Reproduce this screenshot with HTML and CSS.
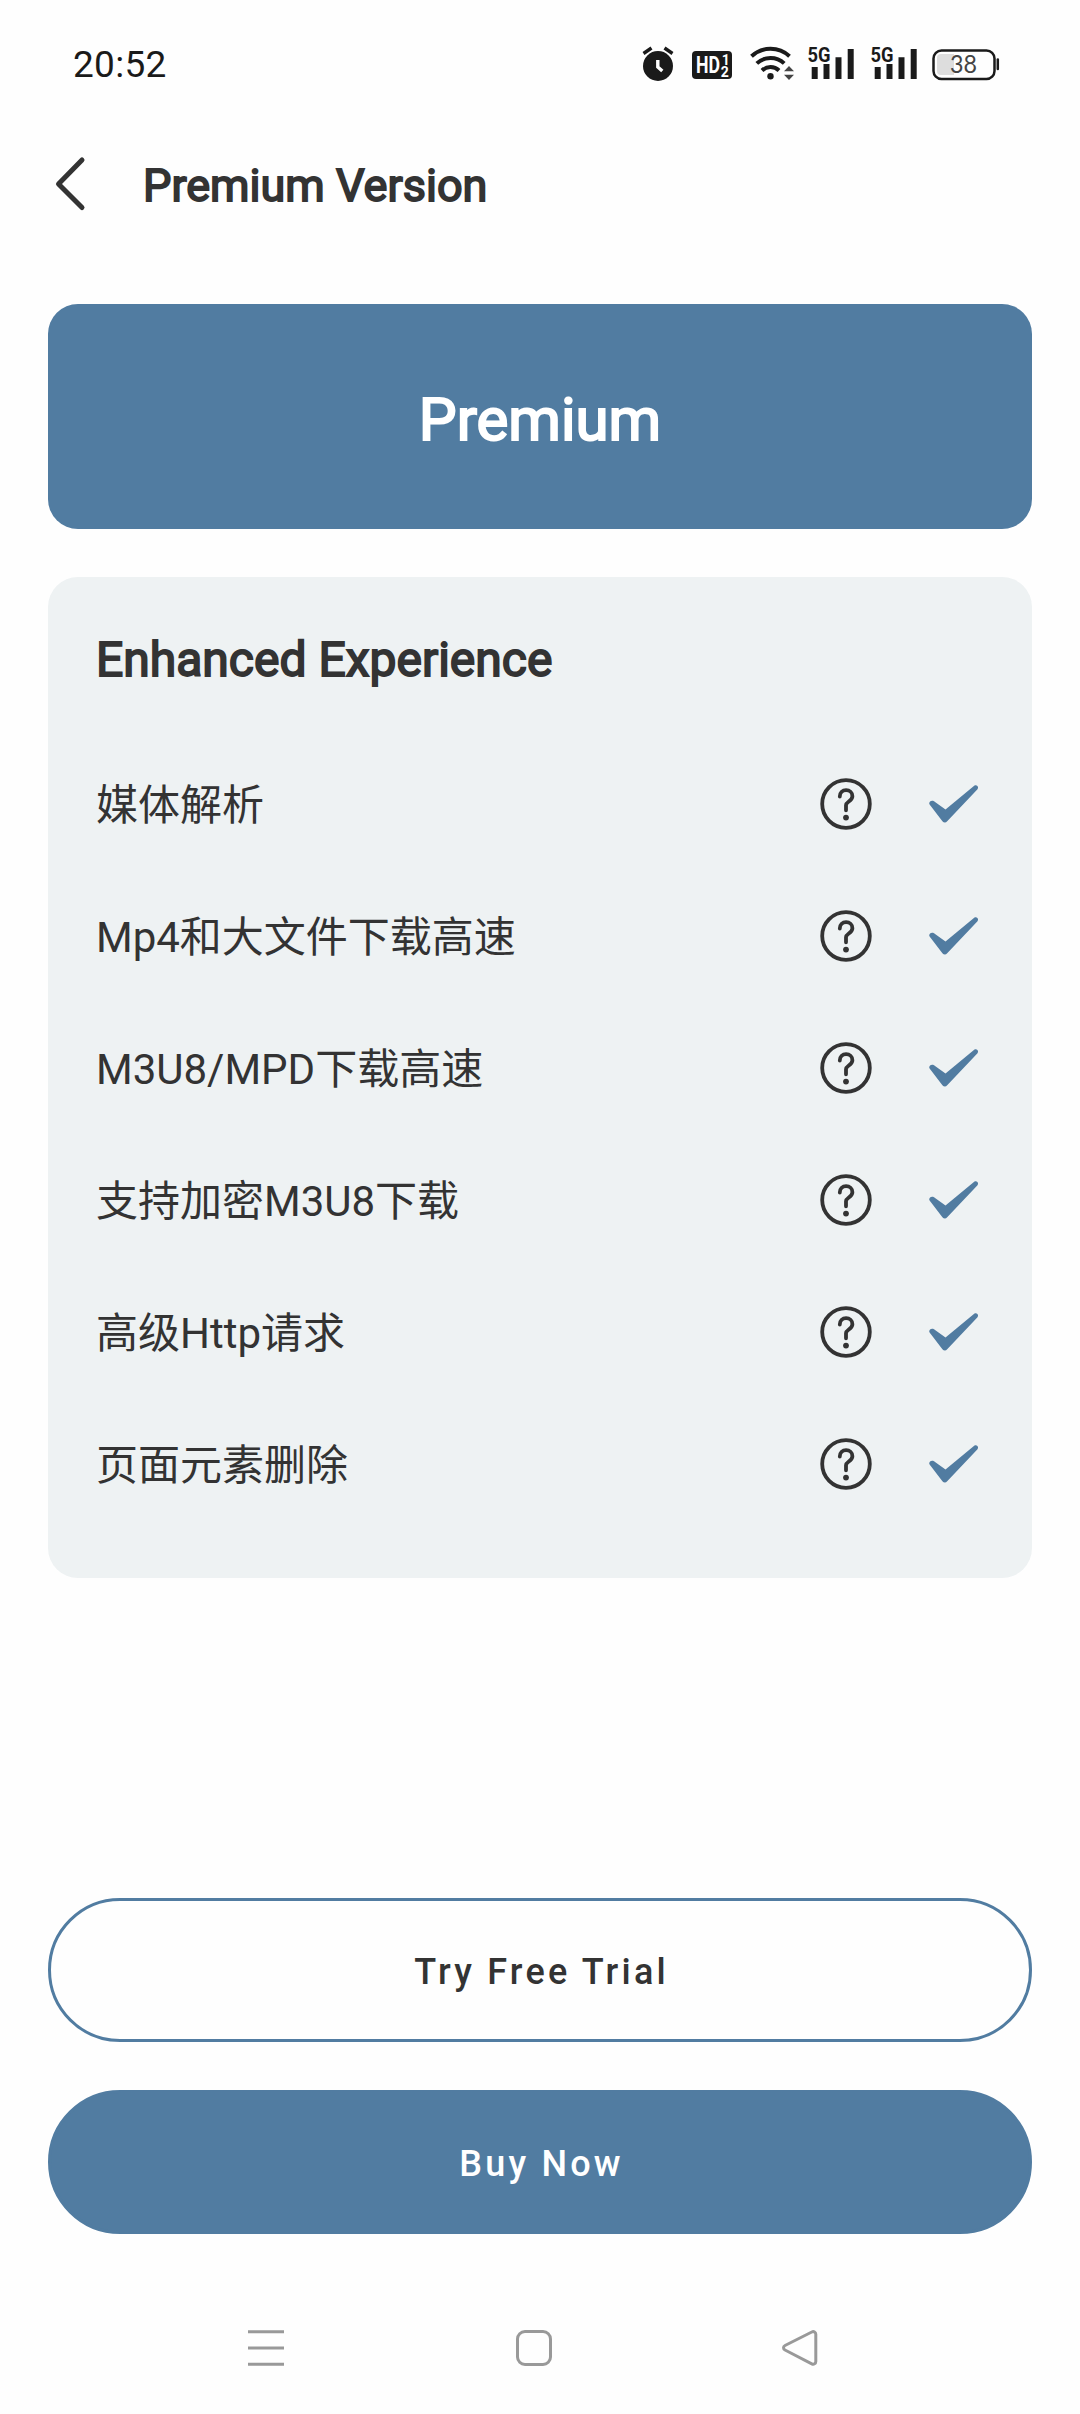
FILE: index.html
```html
<!DOCTYPE html>
<html lang="zh-CN">

<head>
    <meta charset="UTF-8">
    <meta name="viewport" content="width=device-width, initial-scale=1.0">
    <title>Premium Version</title>
    <link rel="stylesheet" href="styles.css">
</head>

<body>
    <!-- Shared icons -->
    <svg class="sprite" width="0" height="0">
        <symbol id="help" viewBox="0 0 52 52">
            <circle cx="26" cy="26" r="23.8" fill="none" stroke="#333" stroke-width="3.8"/>
            <path d="M19.8 18.6c0-4 2.8-6.4 6.3-6.4s6.3 2.5 6.3 6c0 5-6.4 5.4-6.4 9v5.1" fill="none" stroke="#333" stroke-width="3.8" stroke-linecap="round" stroke-linejoin="round"/>
            <circle cx="26" cy="39.6" r="2.9" fill="#333"/>
        </symbol>
        <symbol id="check" viewBox="0 0 50 40">
            <path d="M.6 20.500c-1.400-2 1.300-5 4.400-3.300L16.500 25.600 45.200 1.700c2.600-1.600 5 1.200 3.300 3.500L18.200 37.300c-1.500 1.800-3.300 1.700-4.800-.1z" fill="#517ca1"/>
        </symbol>
    </svg>

    <!-- Status bar -->
    <div class="status-bar">
        <span class="time">20:52</span>
        <div class="status-icons">
            <svg class="alarm" width="32" height="40" viewBox="0 0 32 40">
                <circle cx="16" cy="22" r="15" fill="#1a1a1a"/>
                <path d="M1.500 9.500 9.500 4M30.500 9.500l-8-5.500" stroke="#1a1a1a" stroke-width="3.400"/>
                <path d="M15.800 16v7l4.500 4" fill="none" stroke="#fff" stroke-width="3.400"/>
            </svg>
            <svg class="hd" width="40" height="40" viewBox="0 0 40 40">
                <rect y="7" width="40" height="28" rx="4" fill="#1a1a1a"/>
                <text x="4" y="29" class="hd-label" textLength="24" lengthAdjust="spacingAndGlyphs">HD</text>
                <text x="29.800" y="20.500" class="hd-num">1</text>
                <text x="28.800" y="32.500" class="hd-num">2</text>
            </svg>
            <svg class="wifi" width="45" height="40" viewBox="0 0 45 40">
                <g fill="none" stroke="#1a1a1a" stroke-width="4">
                    <path d="M1.500 12.200a28 28 0 0 1 38 0"/>
                    <path d="M6.800 19.400a20 20 0 0 1 27.400 0"/>
                    <path d="M12 26.500a12.300 12.300 0 0 1 17 0"/>
                </g>
                <circle cx="20.500" cy="32.200" r="3.200" fill="#1a1a1a"/>
                <path d="m39 22 5 5.300H34zM39 36l-5-5.300h10z" fill="#444"/>
            </svg>
            <svg class="signal" width="46" height="40" viewBox="0 0 46 40">
                <text x="-.5" y="18" class="net-label" textLength="23" lengthAdjust="spacingAndGlyphs">5G</text>
                <path d="M3.700 23h6v12h-6zM15.500 20h6v15h-6zM27.500 13.200h6V35h-6zM39.700 5h6v30h-6z" fill="#1a1a1a"/>
            </svg>
            <svg class="signal" width="46" height="40" viewBox="0 0 46 40">
                <text x="-.5" y="18" class="net-label" textLength="23" lengthAdjust="spacingAndGlyphs">5G</text>
                <path d="M3.700 23h6v12h-6zM15.500 20h6v15h-6zM27.500 13.200h6V35h-6zM39.700 5h6v30h-6z" fill="#1a1a1a"/>
            </svg>
            <svg class="battery" width="68" height="40" viewBox="0 0 68 40">
                <rect x="1.500" y="6.500" width="61" height="28.500" rx="8" fill="none" stroke="#1a1a1a" stroke-width="2.500"/>
                <path d="M9 10h13v21H9a4 4 0 0 1-4-4V14a4 4 0 0 1 4-4z" fill="#ddd"/>
                <path d="M65.800 15.500v9.500" stroke="#1a1a1a" stroke-width="2.500" stroke-linecap="round"/>
                <text x="18" y="29" class="battery-label" textLength="27" lengthAdjust="spacingAndGlyphs">38</text>
            </svg>
        </div>
    </div>

    <!-- Header -->
    <header>
        <svg width="32" height="56" viewBox="0 0 32 56">
            <path d="M28 4 4.500 28 28 51.500" fill="none" stroke="#333" stroke-width="5" stroke-linecap="round" stroke-linejoin="round"/>
        </svg>
        <h1>Premium Version</h1>
    </header>

    <main>
        <div class="banner">Premium</div>

        <section class="card">
            <h2>Enhanced Experience</h2>
            <ul>
                <li><span>媒体解析</span><svg class="help"><use href="#help"/></svg><svg class="check"><use href="#check"/></svg></li>
                <li><span>Mp4和大文件下载高速</span><svg class="help"><use href="#help"/></svg><svg class="check"><use href="#check"/></svg></li>
                <li><span>M3U8/MPD下载高速</span><svg class="help"><use href="#help"/></svg><svg class="check"><use href="#check"/></svg></li>
                <li><span>支持加密M3U8下载</span><svg class="help"><use href="#help"/></svg><svg class="check"><use href="#check"/></svg></li>
                <li><span>高级Http请求</span><svg class="help"><use href="#help"/></svg><svg class="check"><use href="#check"/></svg></li>
                <li><span>页面元素删除</span><svg class="help"><use href="#help"/></svg><svg class="check"><use href="#check"/></svg></li>
            </ul>
        </section>
    </main>

    <!-- Buttons -->
    <div class="actions">
        <button class="btn-outline">Try Free Trial</button>
        <button class="btn-fill">Buy Now</button>
    </div>

    <!-- System navigation -->
    <nav>
        <svg width="36" height="36" viewBox="0 0 36 36">
            <path d="M0 1.700h36M0 18h36M0 34.300h36"/>
        </svg>
        <svg class="home" width="36" height="36" viewBox="0 0 36 36">
            <rect x="1.500" y="1.500" width="33" height="33" rx="7.500"/>
        </svg>
        <svg width="36" height="36" viewBox="0 0 36 36">
            <path d="M29.800 2 3 15.500c-2 1-2 3.500 0 4.500l26.800 13.800c2 1 4-.2 4-2.300v-27.200c0-2.100-2-3.300-4-2.300z"/>
        </svg>
    </nav>
</body>

</html>
```

FILE: styles.css
```css
/* Base styles */
* {
    box-sizing: border-box;
}

body {
    font-family: Roboto, "Noto Sans CJK SC", sans-serif;
    margin: 0;
    height: 2414px;
    background: #fefefe;
    color: #333;
    display: flex;
    flex-direction: column;
}

.sprite {
    position: absolute;
}

/* Status bar */
.status-bar {
    height: 128px;
    padding: 0 80px 0 73px;
    display: flex;
    justify-content: space-between;
    align-items: center;
}

.time {
    font-size: 37px;
    letter-spacing: 0.3px;
    color: #1a1a1a;
}

.status-icons {
    display: flex;
}

.hd {
    margin-left: 18px;
}

.wifi {
    margin-left: 18px;
}

.signal {
    margin-left: 13px;
    overflow: visible;
}

.signal + .signal {
    margin-left: 17px;
}

.battery {
    margin-left: 15px;
}

.net-label {
    font-size: 21px;
    font-weight: bold;
    fill: #1a1a1a;
}

.hd-label {
    font-size: 23px;
    font-weight: bold;
    fill: #fff;
}

.hd-num {
    font-size: 14px;
    font-weight: bold;
    fill: #fff;
}

.battery-label {
    font-family: Lato, sans-serif;
    font-size: 25px;
    fill: #444;
}

/* Header */
header {
    height: 112px;
    padding-left: 54px;
    display: flex;
    align-items: center;
    gap: 57px;
}

h1 {
    margin: 2px 0 0;
    font-size: 45px;
    font-weight: 400;
    -webkit-text-stroke: 1.8px #333;
}

/* Content */
main {
    padding: 64px 48px 0;
}

.banner {
    height: 225px;
    padding-top: 6px;
    border-radius: 30px;
    background: #517ca1;
    color: #fff;
    font-size: 60px;
    display: flex;
    align-items: center;
    justify-content: center;
    -webkit-text-stroke: 2px #fff;
}

.card {
    height: 1001px;
    margin-top: 48px;
    padding: 48px;
    border-radius: 30px;
    background: #eef2f3;
}

h2 {
    margin: 0 0 43px;
    font-size: 48px;
    font-weight: 400;
    line-height: 70px;
    -webkit-text-stroke: 1.8px #333;
}

ul {
    list-style: none;
    margin: 0;
    padding: 0;
}

li {
    height: 132px;
    display: flex;
    align-items: center;
}

li span {
    flex: 1;
    padding-top: 4px;
    font-size: 42px;
    line-height: 60px;
    font-weight: 400;
}

.help {
    width: 52px;
    height: 52px;
}

.check {
    width: 50px;
    height: 40px;
    margin: 0 5px 0 57px;
}

/* Buttons */
.actions {
    margin-top: 320px;
    padding: 0 48px;
    display: flex;
    flex-direction: column;
    gap: 48px;
}

button {
    height: 144px;
    padding: 3px 0 0 3px;
    border: 3px solid #517ca1;
    border-radius: 72px;
    font-family: inherit;
    font-size: 36px;
    font-weight: 500;
    letter-spacing: 3.2px;
}

.btn-outline {
    background: transparent;
    color: #333;
}

.btn-fill {
    background: #517ca1;
    color: #fff;
}

/* System navigation */
nav {
    margin-top: 96px;
    padding: 0 262px 0 248px;
    display: flex;
    justify-content: space-between;
}

nav svg {
    fill: none;
    stroke: #999;
    stroke-width: 3;
}

.home {
    margin-left: 2px;
}
```
